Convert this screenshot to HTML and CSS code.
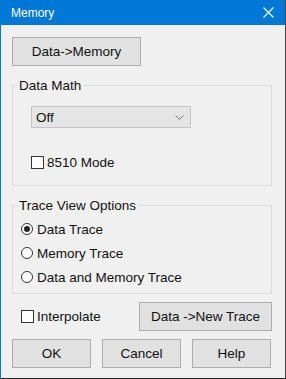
FILE: index.html
```html
<!DOCTYPE html>
<html lang="en">
<head>
    <meta charset="UTF-8">
    <title>Memory</title>
    <link rel="stylesheet" href="styles.css">
</head>
<body>
    <div class="window">
        <div class="titlebar">
            <span class="title">Memory</span>
            <svg class="close" width="11" height="11" viewBox="0 0 11 11">
                <path d="M0.5 0.5 L10.5 10.5 M10.5 0.5 L0.5 10.5" stroke="#fff" stroke-width="1.2" fill="none"/>
            </svg>
        </div>

        <div class="content">
            <button class="btn btn-memory">Data-&gt;Memory</button>

            <fieldset class="group">
                <legend>Data Math</legend>
                <div class="group-math">
                    <div class="select">
                        <span>Off</span>
                        <svg width="9" height="5" viewBox="0 0 9 5">
                            <path d="M0.5 0.5 L4.5 4.5 L8.5 0.5" stroke="#777" stroke-width="1" fill="none"/>
                        </svg>
                    </div>
                    <label class="check check-mode"><span class="box"></span>8510 Mode</label>
                </div>
            </fieldset>

            <fieldset class="group">
                <legend>Trace View Options</legend>
                <div class="group-trace">
                    <label class="radio"><span class="dot checked"></span>Data Trace</label>
                    <label class="radio"><span class="dot"></span>Memory Trace</label>
                    <label class="radio"><span class="dot"></span>Data and Memory Trace</label>
                </div>
            </fieldset>

            <div class="row-extra">
                <label class="check"><span class="box"></span>Interpolate</label>
                <button class="btn btn-new">Data -&gt;New Trace</button>
            </div>

            <div class="row-actions">
                <button class="btn">OK</button>
                <button class="btn">Cancel</button>
                <button class="btn">Help</button>
            </div>
        </div>
    </div>
</body>
</html>
```

FILE: styles.css
```css
body {
    margin: 0;
    padding: 0;
    font-family: 'Liberation Sans', Arial, sans-serif;
    font-size: 13.5px;
    color: #111;
}

.window {
    width: 286px;
    height: 379px;
    box-sizing: border-box;
    background: #f0f0f0;
    border-left: 1px solid #0078d7;
    border-right: 1px solid #444;
    border-bottom: 1px solid #222;
}

.titlebar {
    height: 25px;
    background: #0078d7;
    display: flex;
    align-items: center;
    justify-content: space-between;
    padding: 0 11px 0 10px;
}

.title {
    color: #fff;
    font-size: 12px;
}

.content {
    padding: 12px 13px 0 11px;
}

.btn {
    font-family: inherit;
    font-size: 13.5px;
    color: #111;
    background: #e1e1e1;
    border: 1px solid #adadad;
    height: 29px;
    padding: 0;
    display: block;
}

.btn-memory {
    width: 129px;
}

.group {
    margin: 12px 0 0 0;
    padding: 0;
    border: 1px solid #dcdcdc;
    min-width: 0;
}

.group legend {
    margin-left: 4px;
    padding: 0 2px;
    line-height: 15px;
}

.group-math {
    padding: 13px 0 15px 18px;
}

.select {
    width: 160px;
    height: 22px;
    box-sizing: border-box;
    background: #e5e5e5;
    border: 1px solid #c4c4c4;
    display: flex;
    align-items: center;
    justify-content: space-between;
    padding: 0 6px 0 4px;
}

.check {
    display: flex;
    align-items: center;
    gap: 3px;
    height: 15px;
}

.check-mode {
    margin-top: 27px;
}

.box {
    width: 13px;
    height: 13px;
    box-sizing: border-box;
    border: 1px solid #333;
    background: #fff;
}

.group-trace {
    padding: 4px 0 4px 8px;
}

.radio {
    display: flex;
    align-items: center;
    gap: 4px;
    height: 24px;
}

.dot {
    width: 12px;
    height: 12px;
    box-sizing: border-box;
    border: 1px solid #333;
    border-radius: 50%;
    background: #fff;
    position: relative;
}

.dot.checked::after {
    content: '';
    position: absolute;
    left: 2px;
    top: 2px;
    width: 6px;
    height: 6px;
    border-radius: 50%;
    background: #222;
}

.row-extra {
    display: flex;
    align-items: center;
    justify-content: space-between;
    margin-top: 8px;
    padding-left: 9px;
}

.btn-new {
    width: 133px;
    height: 29px;
}

.row-actions {
    display: flex;
    gap: 11px;
    margin-top: 8px;
}

.row-actions .btn {
    width: 79px;
}
```
